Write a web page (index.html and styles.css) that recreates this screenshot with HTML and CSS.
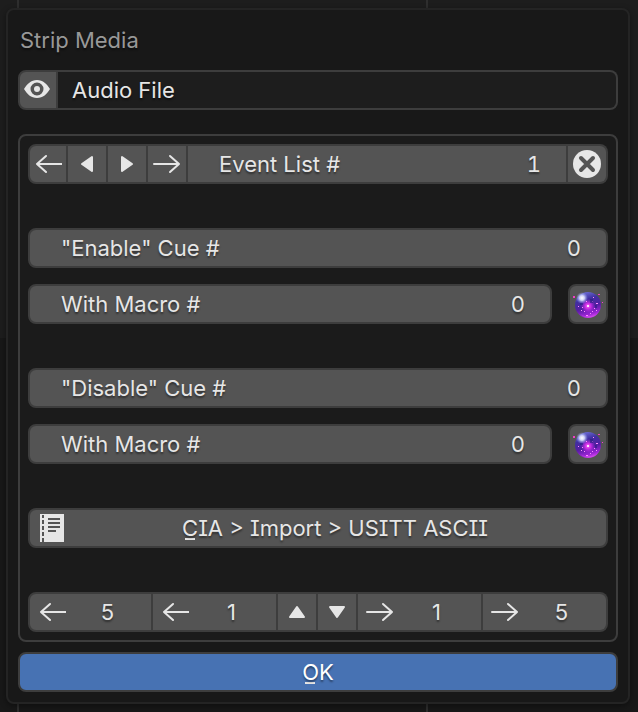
FILE: index.html
```html
<!DOCTYPE html>
<html lang="en">
<head>
<meta charset="utf-8">
<meta name="viewport" content="width=device-width, initial-scale=1">
<title>Strip Media</title>
<link rel="stylesheet" href="styles.css">
</head>
<body>
<svg width="0" height="0" class="defs" aria-hidden="true">
  <defs>
    <linearGradient id="orb-body" x1="0.3" y1="0" x2="0.6" y2="1">
      <stop offset="0" stop-color="#6f72d8"/>
      <stop offset="0.3" stop-color="#4030a0"/>
      <stop offset="0.6" stop-color="#561ea4"/>
      <stop offset="0.85" stop-color="#9a24d4"/>
      <stop offset="1" stop-color="#d848f0"/>
    </linearGradient>
    <radialGradient id="orb-shine">
      <stop offset="0" stop-color="#fff"/>
      <stop offset="0.4" stop-color="#dfe4ff" stop-opacity="0.9"/>
      <stop offset="1" stop-color="#8d96f0" stop-opacity="0"/>
    </radialGradient>
    <radialGradient id="orb-glow">
      <stop offset="0" stop-color="#ff7cf8"/>
      <stop offset="0.4" stop-color="#e030ee" stop-opacity="0.85"/>
      <stop offset="1" stop-color="#b421e6" stop-opacity="0"/>
    </radialGradient>
    <symbol id="arrow-left" viewBox="0 0 28 20">
      <path d="M28 10H3M12 2L3 10L12 18" fill="none" stroke="#e6e6e6" stroke-width="2" stroke-linecap="round" stroke-linejoin="round"/>
    </symbol>
    <symbol id="arrow-right" viewBox="0 0 28 20">
      <path d="M1 10H26M17 2L26 10L17 18" fill="none" stroke="#e6e6e6" stroke-width="2" stroke-linecap="round" stroke-linejoin="round"/>
    </symbol>
    <symbol id="orb" viewBox="0 0 32 32">
      <circle cx="16" cy="17" r="13" fill="url(#orb-body)"/>
      <path d="M8 26A12 12 0 0 0 24 26A14 14 0 0 1 8 26Z" fill="#e85cff" fill-opacity="0.8"/>
      <circle cx="16" cy="18" r="7" fill="url(#orb-glow)"/>
      <ellipse cx="10" cy="10" rx="6" ry="6" fill="url(#orb-shine)"/>
      <path d="M15 17h2v2h-2z" fill="#ffe4ff"/>
      <path d="M10 19h1v1h-1zM14 13h1v1h-1zM20 13h1v1h-1zM22 20h1v1h-1zM12 23h1v1h-1zM18 25h1v1h-1zM24 15h2v1h-2zM6 18h1v1h-1zM21 9h1v1h-1zM9 22h1v1h-1zM20 23h1v1h-1zM24 22h1v1h-1zM14 27h2v1h-2z" fill="#ff8dff"/>
      <path d="M18 11h3v4h-3zM23 17h2v3h-2zM8 15h3v2h-3z" fill="#2a1f80" fill-opacity="0.6"/>
      <path d="M1 8h2v2h-2zM26 6h2v1h-2zM30 14h1v1h-1z" fill="#f03fc8"/>
    </symbol>
  </defs>
</svg>

<main class="panel">
  <h1 class="title">Strip Media</h1>

  <div class="joined">
    <button class="cell eye" type="button" aria-label="Toggle visibility">
      <svg width="28" height="20" viewBox="1 1 28 20">
        <path fill-rule="evenodd" fill="#e6e6e6" d="M1 10C4 5 8 1 14 1S24 5 27 10C24 15 20 19 14 19S4 15 1 10ZM14 3.500A6.500 6.500 0 1 0 14 16.500A6.500 6.500 0 1 0 14 3.500Z"/>
        <circle cx="14" cy="10" r="3" fill="#e6e6e6"/>
      </svg>
    </button>
    <input class="cell name" type="text" value="Audio File" aria-label="Strip name">
  </div>

  <section class="box">
    <div class="joined">
      <button class="cell tool" type="button" aria-label="First event"><svg width="28" height="20"><use href="#arrow-left"/></svg></button>
      <button class="cell tool" type="button" aria-label="Previous event"><svg width="14" height="18" viewBox="0 0 14 18"><path d="M12 2V16L2 9Z" fill="#e6e6e6" stroke="#e6e6e6" stroke-width="2" stroke-linejoin="round"/></svg></button>
      <button class="cell tool" type="button" aria-label="Next event"><svg width="14" height="18" viewBox="0 0 14 18"><path d="M2 2V16L12 9Z" fill="#e6e6e6" stroke="#e6e6e6" stroke-width="2" stroke-linejoin="round"/></svg></button>
      <button class="cell tool" type="button" aria-label="Last event"><svg width="28" height="20"><use href="#arrow-right"/></svg></button>
      <div class="cell number"><label for="event-list">Event List #</label><input id="event-list" type="text" inputmode="numeric" value="1"></div>
      <button class="cell tool" type="button" aria-label="Clear">
        <svg width="28" height="28" viewBox="0 0 28 28"><circle cx="14" cy="14" r="14" fill="#e6e6e6"/><path d="M8 8L20 20M20 8L8 20" stroke="#545454" stroke-width="4" stroke-linecap="round"/></svg>
      </button>
    </div>

    <div class="group">
      <div class="joined">
        <div class="cell number"><label for="enable-cue">"Enable" Cue #</label><input id="enable-cue" type="text" inputmode="numeric" value="0"></div>
      </div>
      <div class="split">
        <div class="joined"><div class="cell number"><label for="enable-macro">With Macro #</label><input id="enable-macro" type="text" inputmode="numeric" value="0"></div></div>
        <div class="joined"><button class="cell tool" type="button" aria-label="Fire enable macro"><svg width="32" height="32"><use href="#orb"/></svg></button></div>
      </div>
    </div>

    <div class="group">
      <div class="joined">
        <div class="cell number"><label for="disable-cue">"Disable" Cue #</label><input id="disable-cue" type="text" inputmode="numeric" value="0"></div>
      </div>
      <div class="split">
        <div class="joined"><div class="cell number"><label for="disable-macro">With Macro #</label><input id="disable-macro" type="text" inputmode="numeric" value="0"></div></div>
        <div class="joined"><button class="cell tool" type="button" aria-label="Fire disable macro"><svg width="32" height="32"><use href="#orb"/></svg></button></div>
      </div>
    </div>

    <div class="joined">
      <button class="cell import" type="button">
        <svg width="24" height="28" viewBox="0 0 24 28">
          <path fill="#e6e6e6" d="M0 0H2V28H0ZM4 0H24V28H4Z"/>
          <path fill="#e6e6e6" d="M2 0H4V1H2ZM2 4H4V6H2ZM2 10H4V12H2ZM2 16H4V18H2ZM2 22H4V24H2Z"/>
          <path fill="#545454" d="M8 4H20V6H8ZM8 8H20V10H8ZM8 12H20V14H8ZM8 16H16V18H8Z"/>
        </svg>
        <span class="caption"><span class="key">C</span>IA &gt; Import &gt; USITT ASCII</span>
      </button>
    </div>

    <div class="joined">
      <button class="cell nudge" type="button"><svg width="28" height="20"><use href="#arrow-left"/></svg><span class="caption">5</span></button>
      <button class="cell nudge" type="button"><svg width="28" height="20"><use href="#arrow-left"/></svg><span class="caption">1</span></button>
      <button class="cell tool" type="button" aria-label="Up"><svg width="18" height="14" viewBox="0 0 18 14"><path d="M2 12H16L9 2Z" fill="#e6e6e6" stroke="#e6e6e6" stroke-width="2" stroke-linejoin="round"/></svg></button>
      <button class="cell tool" type="button" aria-label="Down"><svg width="18" height="14" viewBox="0 0 18 14"><path d="M2 2H16L9 12Z" fill="#e6e6e6" stroke="#e6e6e6" stroke-width="2" stroke-linejoin="round"/></svg></button>
      <button class="cell nudge" type="button"><svg width="28" height="20"><use href="#arrow-right"/></svg><span class="caption">1</span></button>
      <button class="cell nudge" type="button"><svg width="28" height="20"><use href="#arrow-right"/></svg><span class="caption">5</span></button>
    </div>
  </section>

  <button class="ok" type="button"><span><span class="key">O</span>K</span></button>
</main>
</body>
</html>
```
FILE: styles.css
```css
* {
  box-sizing: border-box;
}

body {
  margin: 0;
  min-height: 100vh;
  padding: 8px 8px 8px 6px;
  background:
    linear-gradient(#2e2e2e, #2e2e2e) 17px 0 / 2px 100% no-repeat,
    linear-gradient(#2e2e2e, #2e2e2e) 426px 0 / 2px 100% no-repeat,
    linear-gradient(#1d1d1d 338px, #181818 338px);
  color: #e6e6e6;
  font: 22px/28px Inter, "Liberation Sans", sans-serif;
  font-feature-settings: "cv08";
}

button,
input {
  margin: 0;
  padding: 0;
  color: inherit;
  font: inherit;
  font-feature-settings: inherit;
  text-shadow: inherit;
}

svg {
  display: block;
  flex: none;
}

.defs {
  position: absolute;
}

.panel {
  display: flex;
  flex-direction: column;
  padding: 16px 10px 10px;
  border: 2px solid #242424;
  border-radius: 8px;
  background: #181818;
  box-shadow: 0 2px 6px rgba(0, 0, 0, 0.4);
  text-shadow: 0 2px 2px rgba(0, 0, 0, 0.45);
}

.title {
  margin: 0 2px 16px;
  color: #989898;
  font-size: 22px;
  font-weight: 400;
}

.joined {
  display: flex;
  flex: 1;
  min-width: 0;
}

.cell {
  display: flex;
  align-items: center;
  justify-content: center;
  height: 40px;
  border: 2px solid #3d3d3d;
  border-left-width: 0;
  background: #545454;
}

.cell:first-child {
  border-left-width: 2px;
  border-top-left-radius: 8px;
  border-bottom-left-radius: 8px;
}

.cell:last-child {
  border-top-right-radius: 8px;
  border-bottom-right-radius: 8px;
}

.eye,
.tool {
  flex: none;
  width: 40px;
}

.name {
  flex: 1;
  min-width: 0;
  padding: 0 14px;
  background: #1d1d1d;
}

.box {
  display: flex;
  flex-direction: column;
  gap: 44px;
  margin: 24px 0 10px;
  padding: 8px;
  border: 2px solid #3d3d3d;
  border-radius: 8px;
  background: #1b1b1b;
}

.group {
  display: flex;
  flex-direction: column;
  gap: 16px;
}

.split {
  display: flex;
  gap: 16px;
}

.split .joined:last-child {
  flex: none;
}

.number {
  flex: 1;
  min-width: 0;
  padding: 0 25px 0 31px;
}

.number label {
  white-space: nowrap;
}

.number input {
  flex: 1;
  width: 0;
  min-width: 0;
  border: 0;
  background: none;
  text-align: right;
  font-variant-numeric: tabular-nums;
}

.import {
  flex: 1;
  min-width: 0;
  padding: 0 0 0 10px;
}

.nudge {
  flex: 1 1 100px;
  min-width: 0;
  padding: 0 2px 0 8px;
}

.caption {
  flex: 1;
  text-align: center;
}

.key {
  background: linear-gradient(#e6e6e6, #e6e6e6) left 3px bottom 1px / 10px 2px no-repeat;
}

.ok {
  height: 40px;
  border: 2px solid #3d3d3d;
  border-radius: 8px;
  background: #4772b3;
  color: #fff;
}
```
